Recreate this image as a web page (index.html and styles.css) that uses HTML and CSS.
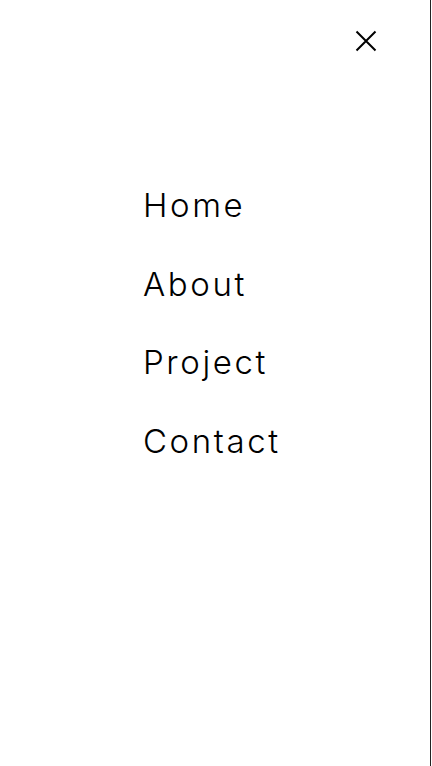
FILE: index.html
```html
<!DOCTYPE html>
<html>
<head>
<meta charset="utf-8">
<link rel="stylesheet" href="styles.css">
</head>
<body>
<div class="menu">
  <div class="top">
    <button class="close" aria-label="Close">
      <svg width="24" height="24" viewBox="0 0 24 24"><path d="M2.5 2.5 L21.5 21.5 M21.5 2.5 L2.5 21.5" stroke="#000" stroke-width="2" fill="none"/></svg>
    </button>
  </div>
  <ul class="nav">
    <li><a href="#">Home</a></li>
    <li><a href="#">About</a></li>
    <li><a href="#">Project</a></li>
    <li><a href="#">Contact</a></li>
  </ul>
</div>
</body>
</html>
```
FILE: styles.css
```css
html, body {
  margin: 0;
  padding: 0;
  background: #fff;
}
.menu {
  width: 430px;
  height: 766px;
  border-right: 1px solid #222;
  box-sizing: content-box;
  font-family: Inter, "Liberation Sans", sans-serif;
}
.top {
  display: flex;
  justify-content: flex-end;
  padding: 29px 52px 0 0;
}
.close {
  background: none;
  border: 0;
  padding: 0;
  width: 24px;
  height: 24px;
  display: block;
}
.close svg { display: block; }
.nav {
  list-style: none;
  margin: 0;
  padding: 128px 0 0 143px;
  display: flex;
  flex-direction: column;
  gap: 30.6px;
}
.nav li {
  line-height: 48px;
  font-size: 33px;
  font-weight: 350;
  letter-spacing: 2.6px;
}
.nav a {
  color: #000;
  text-decoration: none;
}
```
